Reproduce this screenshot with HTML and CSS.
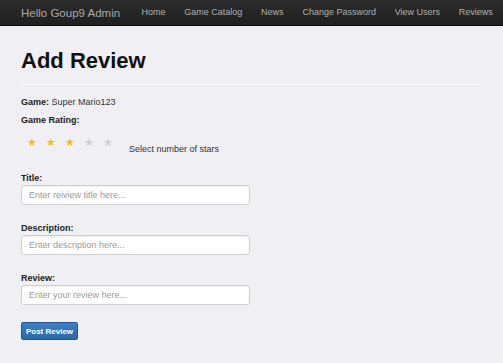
FILE: index.html
```html
<!DOCTYPE html>
<html>
<head>
<meta charset="utf-8">
<link rel="stylesheet" href="styles.css">
</head>
<body>
<nav class="navbar">
  <span class="brand">Hello Goup9 Admin</span>
  <ul class="nav">
    <li>Home</li>
    <li>Game Catalog</li>
    <li>News</li>
    <li>Change Password</li>
    <li>View Users</li>
    <li>Reviews</li>
  </ul>
</nav>
<main class="container">
  <h1 class="title">Add Review</h1>
  <div class="rule"></div>
  <p class="line"><b>Game:</b> Super Mario123</p>
  <p class="line"><b>Game Rating:</b></p>
  <div class="rating">
    <div class="stars">
      <span class="star on">★</span>
      <span class="star on">★</span>
      <span class="star on">★</span>
      <span class="star">★</span>
      <span class="star">★</span>
    </div>
    <span class="hint">Select number of stars</span>
  </div>
  <form class="form">
    <div class="group">
      <label class="label">Title:</label>
      <input class="input" type="text" placeholder="Enter reiview title here...">
    </div>
    <div class="group">
      <label class="label">Description:</label>
      <input class="input" type="text" placeholder="Enter description here...">
    </div>
    <div class="group">
      <label class="label">Review:</label>
      <input class="input" type="text" placeholder="Enter your review here...">
    </div>
    <button class="btn" type="button">Post Review</button>
  </form>
</main>
</body>
</html>
```

FILE: styles.css
```css
html, body {
  margin: 0;
  padding: 0;
}
body {
  background: #efeff4;
  font-family: "Liberation Sans", Arial, sans-serif;
  color: #333;
  width: 503px;
  height: 363px;
  overflow: hidden;
}
.navbar {
  height: 25px;
  background: linear-gradient(#2c2c2c, #1f1f1f);
  border-bottom: 1px solid #0a0a0a;
  display: flex;
  align-items: center;
  padding-left: 21px;
}
.brand {
  color: #a8a8a8;
  font-size: 11.5px;
  margin-right: 12px;
}
.nav {
  display: flex;
  list-style: none;
  margin: 0;
  padding: 0;
}
.nav li {
  color: #b0b0b0;
  font-size: 9px;
  padding: 0 9.4px;
  line-height: 25px;
}
.container {
  padding: 0 21px;
}
.title {
  margin: 22px 0 0;
  font-size: 22px;
  line-height: 26px;
  font-weight: bold;
  color: #111;
}
.rule {
  margin-top: 10px;
  border-top: 1px solid #f7f7fa;
  height: 0;
}
.line {
  margin: 11px 0 0;
  font-size: 9px;
  line-height: 13px;
  color: #333;
}
.line + .line {
  margin-top: 5px;
}
.line b {
  color: #222;
}
.rating {
  display: flex;
  align-items: flex-start;
  margin-top: 8px;
}
.stars {
  display: flex;
  padding-left: 1px;
}
.star {
  width: 19px;
  text-align: center;
  font-size: 11px;
  line-height: 14px;
  color: #cfcfcf;
}
.star.on {
  color: #f9bd14;
}
.hint {
  font-size: 9px;
  line-height: 13px;
  margin-left: 12px;
  margin-top: 8px;
  color: #333;
}
.form {
  margin-top: 16px;
  display: flex;
  flex-direction: column;
  align-items: flex-start;
}
.group {
  display: flex;
  flex-direction: column;
  margin-bottom: 17px;
}
.label {
  font-size: 9px;
  font-weight: bold;
  line-height: 13px;
  color: #222;
}
.input {
  box-sizing: border-box;
  width: 229px;
  height: 20px;
  margin: 0;
  padding: 0 7px;
  border: 1px solid #cfcfd3;
  border-radius: 3px;
  background: #fff;
  box-shadow: inset 0 1px 1px rgba(0,0,0,0.06);
  font-family: "Liberation Sans", Arial, sans-serif;
  font-size: 9px;
  color: #555;
}
.input::placeholder {
  color: #9a9a9a;
}
.btn {
  box-sizing: border-box;
  width: 57px;
  height: 18px;
  padding: 0;
  border: 1px solid #23578f;
  border-radius: 2px;
  background: linear-gradient(#3d82c4, #2b6aa8);
  color: #fff;
  font-family: "Liberation Sans", Arial, sans-serif;
  font-size: 8px;
  font-weight: bold;
}
```
